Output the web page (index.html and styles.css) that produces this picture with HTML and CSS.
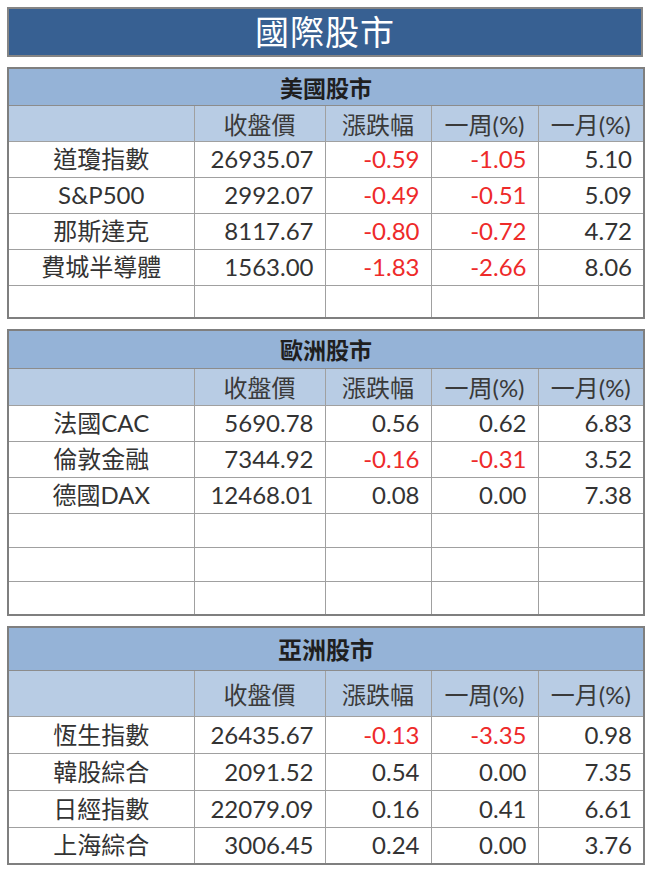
FILE: index.html
```html
<!DOCTYPE html>
<html lang="zh-Hant">
<head>
<meta charset="utf-8">
<title>國際股市</title>
<link rel="stylesheet" href="styles.css">
</head>
<body>
<div class="page">
  <div class="title">國際股市</div>

  <table class="market us">
    <colgroup><col class="c1"><col class="c2"><col class="c3"><col class="c4"><col class="c5"></colgroup>
    <tr class="sec"><th colspan="5">美國股市</th></tr>
    <tr class="hdr"><th></th><th>收盤價</th><th>漲跌幅</th><th>一周(%)</th><th>一月(%)</th></tr>
    <tr><td class="name">道瓊指數</td><td>26935.07</td><td class="neg">-0.59</td><td class="neg">-1.05</td><td>5.10</td></tr>
    <tr><td class="name">S&amp;P500</td><td>2992.07</td><td class="neg">-0.49</td><td class="neg">-0.51</td><td>5.09</td></tr>
    <tr><td class="name">那斯達克</td><td>8117.67</td><td class="neg">-0.80</td><td class="neg">-0.72</td><td>4.72</td></tr>
    <tr><td class="name">費城半導體</td><td>1563.00</td><td class="neg">-1.83</td><td class="neg">-2.66</td><td>8.06</td></tr>
    <tr class="short"><td class="name"></td><td></td><td></td><td></td><td></td></tr>
  </table>

  <table class="market eu">
    <colgroup><col class="c1"><col class="c2"><col class="c3"><col class="c4"><col class="c5"></colgroup>
    <tr class="sec"><th colspan="5">歐洲股市</th></tr>
    <tr class="hdr"><th></th><th>收盤價</th><th>漲跌幅</th><th>一周(%)</th><th>一月(%)</th></tr>
    <tr><td class="name">法國CAC</td><td>5690.78</td><td>0.56</td><td>0.62</td><td>6.83</td></tr>
    <tr><td class="name">倫敦金融</td><td>7344.92</td><td class="neg">-0.16</td><td class="neg">-0.31</td><td>3.52</td></tr>
    <tr><td class="name">德國DAX</td><td>12468.01</td><td>0.08</td><td>0.00</td><td>7.38</td></tr>
    <tr class="short"><td class="name"></td><td></td><td></td><td></td><td></td></tr>
    <tr class="short"><td class="name"></td><td></td><td></td><td></td><td></td></tr>
    <tr class="short"><td class="name"></td><td></td><td></td><td></td><td></td></tr>
  </table>

  <table class="market asia">
    <colgroup><col class="c1"><col class="c2"><col class="c3"><col class="c4"><col class="c5"></colgroup>
    <tr class="sec"><th colspan="5">亞洲股市</th></tr>
    <tr class="hdr"><th></th><th>收盤價</th><th>漲跌幅</th><th>一周(%)</th><th>一月(%)</th></tr>
    <tr><td class="name">恆生指數</td><td>26435.67</td><td class="neg">-0.13</td><td class="neg">-3.35</td><td>0.98</td></tr>
    <tr><td class="name">韓股綜合</td><td>2091.52</td><td>0.54</td><td>0.00</td><td>7.35</td></tr>
    <tr><td class="name">日經指數</td><td>22079.09</td><td>0.16</td><td>0.41</td><td>6.61</td></tr>
    <tr><td class="name">上海綜合</td><td>3006.45</td><td>0.24</td><td>0.00</td><td>3.76</td></tr>
  </table>
</div>
</body>
</html>
```
FILE: styles.css
```css
* { box-sizing: border-box; }
html, body { margin: 0; padding: 0; background: #ffffff; }
body {
  font-family: Lato, "Noto Sans CJK TC", sans-serif;
  color: #333333;
}
.page {
  width: 649px;
  padding: 7px 6px 0 7px;
  display: flex;
  flex-direction: column;
  gap: 10px;
}
.title {
  height: 50px;
  background: #376092;
  border: 2px solid #858585;
  color: #ffffff;
  font-family: "Noto Sans CJK TC", sans-serif;
  font-size: 34px;
  line-height: 44px;
  text-align: center;
  letter-spacing: 1px;
}
.market {
  width: 636px;
  table-layout: fixed;
  border-collapse: collapse;
  border: 2px solid #7f7f7f;
}
.market col.c1 { width: 186px; }
.market col.c2 { width: 131px; }
.market col.c3 { width: 106px; }
.market col.c4 { width: 107px; }
.market col.c5 { width: 106px; }
.market th, .market td {
  border: 1px solid #a0a0a0;
  padding: 0 11px 0 4px;
  font-size: 24px;
  font-weight: 400;
  white-space: nowrap;
  overflow: hidden;
}
.market tr.sec th {
  background: #95b3d7;
  height: 37px;
  font-family: "Noto Sans CJK TC", sans-serif;
  font-size: 23px;
  font-weight: 700;
  color: #1f1f1f;
  text-align: center;
  padding: 0;
  border-bottom: 1px solid #8c8c8c;
}
.market tr.hdr th {
  background: #b8cce4;
  height: 36px;
  text-align: center;
  padding: 0 4px;
  color: #3a3a3a;
}
.market td {
  height: 36px;
  text-align: right;
  line-height: 30px;
}
.market td.name {
  text-align: center;
  padding: 0 4px;
}
.market td.neg { color: #ee2a2a; }
.market tr.short td { height: 33px; }
.eu td { height: 36px; }
.eu tr.short td { height: 34px; }
.eu tr.sec th { height: 38px; }
.eu tr.hdr th { height: 37px; }
.asia tr.sec th { height: 43px; font-size: 24px; }
.asia tr.hdr th { height: 46px; }
.asia td { height: 37px; }
```
